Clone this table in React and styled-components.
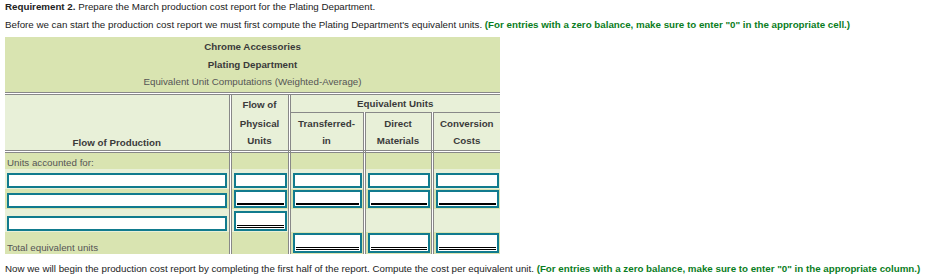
import React from 'react';
import styled, { createGlobalStyle } from 'styled-components';

const Global = createGlobalStyle`
  html, body { margin: 0; padding: 0; background: #fff; }
  body { font-family: "Liberation Sans", Arial, sans-serif; font-size: 9.75px; color: #222; }
`;

const Page = styled.div`
  padding: 1px 5px 0;
  width: 944px;
  box-sizing: border-box;
`;

const Line = styled.p`
  margin: 0 0 ${p => p.$mb}px;
  line-height: 12px;
  font-size: 9.75px;
  color: #222;
  white-space: nowrap;
`;

const Strong = styled.b`
  font-weight: bold;
  color: #222;
`;

const Hint = styled.span`
  color: #0a7d22;
  font-weight: bold;
`;

const Table = styled.table`
  border-collapse: collapse;
  table-layout: fixed;
  width: 495px;
  margin: 0 0 9px;
  font-size: 9.75px;
`;

const Row = styled.tr`
  height: ${p => p.$h}px;
`;

const Cell = styled.td`
  padding: ${p => p.$pad || '0 2px'};
  background: ${p => (p.$light ? '#e8f0d8' : '#d9e4b1')};
  text-align: ${p => p.$align || 'center'};
  vertical-align: ${p => p.$valign || 'middle'};
  font-weight: ${p => (p.$bold ? 'bold' : 'normal')};
  color: ${p => (p.$muted ? '#555' : '#3a3a3a')};
  line-height: 12px;
  white-space: nowrap;
  overflow: hidden;
  border-right: ${p => (p.$sep ? '3px double #888' : 'none')};
  border-bottom: ${p =>
    p.$under === 'double' ? '3px double #888' : p.$under === 'single' ? '1px solid #888' : 'none'};
`;

const Box = styled.span`
  display: block;
  border: 2px solid #117b8e;
  background: #fff;
  padding: 0 1px ${p => (p.$rule ? 1 : 0)}px;
`;

const Field = styled.input`
  display: block;
  width: 100%;
  box-sizing: border-box;
  height: ${p => (p.$rule === 'double' ? 15 : p.$rule === 'single' ? 13 : 11)}px;
  margin: 0;
  padding: 0;
  border: none;
  outline: none;
  background: transparent;
  font: inherit;
  border-bottom: ${p =>
    p.$rule === 'double' ? '3px double #000' : p.$rule === 'single' ? '2px solid #000' : 'none'};
`;

const Input = ({ rule }) => (
  <Box $rule={rule}>
    <Field type="text" $rule={rule} aria-label="entry" />
  </Box>
);

const bodyRows = [
  { h: 18, light: false, label: 'Units accounted for:', cells: [null, null, null, null] },
  { h: 20, light: true, first: 'plain', cells: ['plain', 'plain', 'plain', 'plain'] },
  { h: 19, light: false, first: 'plain', cells: ['single', 'single', 'single', 'single'] },
  { h: 23, light: true, first: 'plain', cells: ['double', null, null, null] },
  { h: 22, light: false, label: 'Total equivalent units', cells: [null, 'double', 'double', 'double'] },
];

const ruleOf = kind => (kind === 'plain' ? undefined : kind);

export default function App() {
  return (
    <Page>
      <Global />
      <Line $mb={6}>
        <Strong>Requirement 2.</Strong> Prepare the March production cost report for the Plating Department.
      </Line>
      <Line $mb={6}>
        Before we can start the production cost report we must first compute the Plating Department's
        equivalent units. <Hint>(For entries with a zero balance, make sure to enter "0" in the appropriate cell.)</Hint>
      </Line>

      <Table>
        <colgroup>
          <col style={{ width: 225 }} />
          <col style={{ width: 59 }} />
          <col style={{ width: 75 }} />
          <col style={{ width: 68 }} />
          <col style={{ width: 68 }} />
        </colgroup>
        <thead>
          <Row $h={18}>
            <Cell colSpan={5} $bold $pad="1px 2px 0">Chrome Accessories</Cell>
          </Row>
          <Row $h={18}>
            <Cell colSpan={5} $bold $pad="1px 2px 0">Plating Department</Cell>
          </Row>
          <Row $h={20}>
            <Cell colSpan={5} $muted $under="double">Equivalent Unit Computations (Weighted-Average)</Cell>
          </Row>
          <Row $h={19}>
            <Cell rowSpan={3} $light $bold $sep $valign="bottom" $under="double" $pad="0 2px 1px">
              Flow of Production
            </Cell>
            <Cell $light $bold $sep $valign="bottom" $pad="0 2px 1px">Flow of</Cell>
            <Cell colSpan={3} $light $bold $under="single" $valign="bottom" $pad="0 2px 2px">
              Equivalent Units
            </Cell>
          </Row>
          <Row $h={19}>
            <Cell $light $bold $sep $pad="4px 2px 0">Physical</Cell>
            <Cell $light $bold $sep $pad="4px 2px 0">Transferred-</Cell>
            <Cell $light $bold $sep $pad="4px 2px 0">Direct</Cell>
            <Cell $light $bold $pad="4px 2px 0">Conversion</Cell>
          </Row>
          <Row $h={20}>
            <Cell $light $bold $sep $under="double" $pad="2px 2px 0">Units</Cell>
            <Cell $light $bold $sep $under="double" $pad="2px 2px 0">in</Cell>
            <Cell $light $bold $sep $under="double" $pad="2px 2px 0">Materials</Cell>
            <Cell $light $bold $under="double" $pad="2px 2px 0">Costs</Cell>
          </Row>
        </thead>
        <tbody>
          {bodyRows.map((r, i) => (
            <Row key={i} $h={r.h}>
              {r.label ? (
                <Cell $light={r.light} $muted $sep $align="left" $valign="bottom" $pad="0 2px 0">
                  {r.label}
                </Cell>
              ) : (
                <Cell $light={r.light} $sep $valign="bottom" $pad="1px 2px 1px">
                  <Input rule={ruleOf(r.first)} />
                </Cell>
              )}
              {r.cells.map((c, j) => (
                <Cell key={j} $light={r.light} $sep={j < 3} $valign="bottom" $pad="1px 1px 1px 2px">
                  {c ? <Input rule={ruleOf(c)} /> : null}
                </Cell>
              ))}
            </Row>
          ))}
        </tbody>
      </Table>

      <Line $mb={0}>
        Now we will begin the production cost report by completing the first half of the report. Compute the cost
        per equivalent unit. <Hint>(For entries with a zero balance, make sure to enter "0" in the appropriate column.)</Hint>
      </Line>
    </Page>
  );
}
